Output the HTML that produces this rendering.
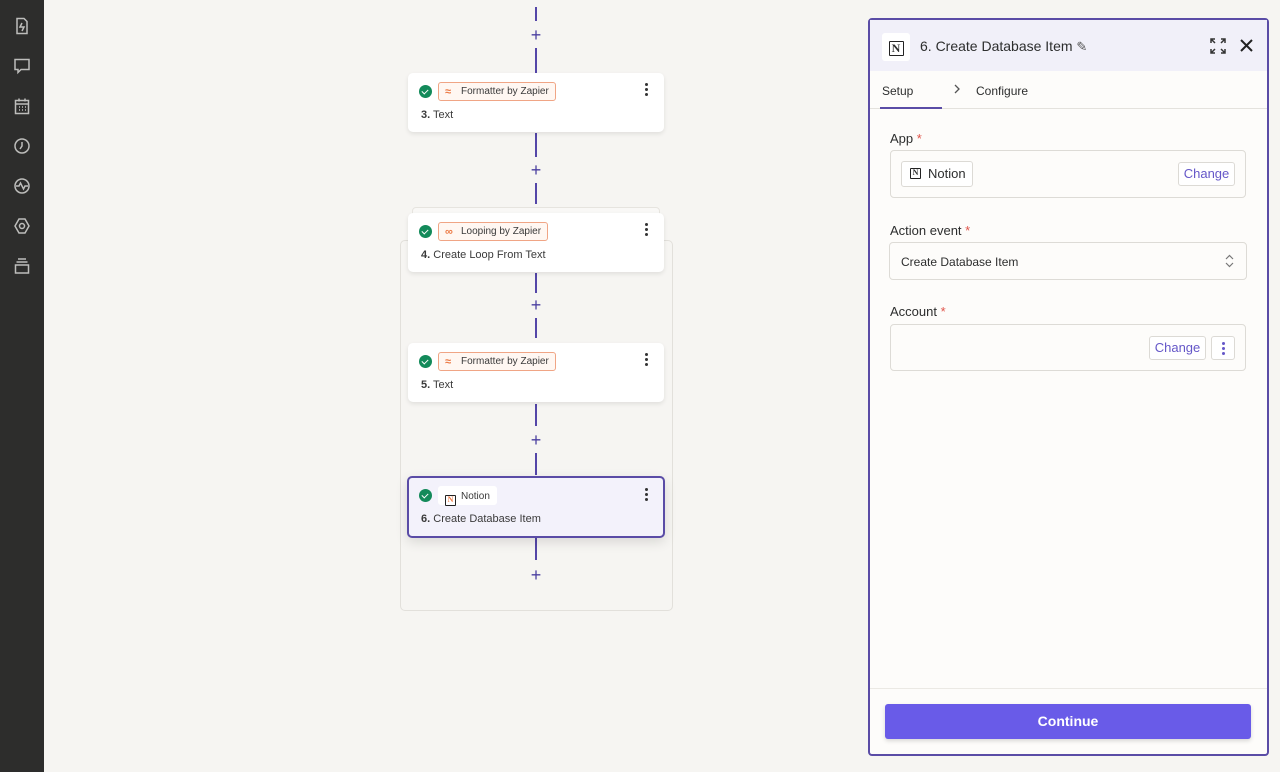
<!DOCTYPE html>
<html><head><meta charset="utf-8"><style>
*{box-sizing:border-box;margin:0;padding:0}
body{width:1280px;height:772px;background:#f6f5f2;font-family:"Liberation Sans",sans-serif;position:relative;overflow:hidden;color:#2d2e2e}
.side{position:absolute;left:0;top:0;width:44px;height:772px;background:#2d2d2c}
.side svg{position:absolute;left:13px;width:18px;height:18px;fill:none;stroke:#bdbdbb;stroke-width:1.5}
.line{position:absolute;left:535px;width:2px;background:#5446a8}
.plus{position:absolute;left:529px;width:14px;height:14px;color:#4b3fa0;font-size:18px;line-height:14px;text-align:center}
.card{position:absolute;left:408px;width:256px;height:59px;background:#fff;border-radius:5px;box-shadow:0 2px 5px rgba(0,0,0,.09)}
.chk{position:absolute;left:11px;top:12px;width:13px;height:13px;border-radius:50%;background:#138a5a}
.chk:after{content:"";position:absolute;left:4px;top:3px;width:3px;height:5px;border:solid #fff;border-width:0 1.5px 1.5px 0;transform:rotate(45deg)}
.tag{position:absolute;left:30px;top:9px;height:19px;border:1px solid #f0a585;background:#fff7f2;border-radius:3px;font-size:10px;line-height:18px;padding:0 6px 0 22px;color:#3a3a3a}
.tag i{position:absolute;left:6px;top:0;color:#ec7a45;font-style:normal;font-size:11px;font-weight:bold}
.dots{position:absolute;right:16px;top:10px;width:3px}
.dots b{display:block;width:3px;height:3px;background:#333;border-radius:50%;margin-bottom:2px}
.title{position:absolute;left:13px;top:36px;font-size:11px;color:#3a3a3a}
.title b{font-weight:bold}
.panel{position:absolute;left:868px;top:18px;width:401px;height:738px;border:2px solid #5a4ca6;border-radius:4px;background:#fdfcfa}
.hdr{height:51px;background:#f1f0f9;position:relative}
.lab{position:absolute;left:20px;font-size:13px;color:#2d2e2e}
.lab span{color:#e0544a}
.box{position:absolute;left:20px;width:356px;border:1px solid #dddbd6;border-radius:4px;background:#fdfcfa}
.btn{position:absolute;border:1px solid #dcdad5;border-radius:3px;font-size:13px;color:#6557c8;background:#fff;text-align:center}
.nl{display:inline-block;width:12px;height:12px;border:1.5px solid #222;font-family:"Liberation Serif",serif;font-size:9px;line-height:9px;text-align:center;font-weight:bold;border-radius:1px}
</style></head><body>
<div class="side">
<svg style="top:17px" viewBox="0 0 18 18"><path d="M4 1.5h7l3 3v12H4z M9 6l-2 4h4l-2 4"/></svg>
<svg style="top:57px" viewBox="0 0 18 18"><path d="M2 2.5h14v10H8l-3 3v-3H2z"/></svg>
<svg style="top:97px" viewBox="0 0 18 18"><path d="M2.5 3.5h13v13h-13z M2.5 7h13 M6 1.5v3 M12 1.5v3 M6 10h1M9 10h1M12 10h1M6 13h1M9 13h1M12 13h1"/></svg>
<svg style="top:137px" viewBox="0 0 18 18"><circle cx="9" cy="9" r="7"/><path d="M9 5v4l-2 3"/></svg>
<svg style="top:177px" viewBox="0 0 18 18"><circle cx="9" cy="9" r="7"/><path d="M3 9h3l1.5-3 3 6 1.5-3h3"/></svg>
<svg style="top:217px" viewBox="0 0 18 18"><path d="M6 2h6l4 7-4 7H6L2 9z"/><circle cx="9" cy="9" r="2.5"/></svg>
<svg style="top:257px" viewBox="0 0 18 18"><path d="M5 2h8 M3.5 5h11 M2.5 8h13v8h-13z"/></svg>
</div>

<div style="position:absolute;left:400px;top:240px;width:273px;height:371px;border:1px solid #e2e0db;border-radius:5px"></div>
<div style="position:absolute;left:412px;top:207px;width:248px;height:10px;border:1px solid #e6e4df;border-radius:4px;background:#f9f8f6"></div>

<div class="line" style="top:7px;height:14px"></div><div class="plus" style="top:28px">+</div><div class="line" style="top:48px;height:25px"></div>
<div class="line" style="top:133px;height:24px"></div><div class="plus" style="top:163px">+</div><div class="line" style="top:183px;height:21px"></div>
<div class="line" style="top:273px;height:20px"></div><div class="plus" style="top:298px">+</div><div class="line" style="top:318px;height:20px"></div>
<div class="line" style="top:404px;height:22px"></div><div class="plus" style="top:433px">+</div><div class="line" style="top:453px;height:22px"></div>
<div class="line" style="top:538px;height:22px"></div><div class="plus" style="top:568px">+</div>

<div class="card" style="top:73px"><div class="chk"></div><div class="tag"><i>≈</i>Formatter by Zapier</div><div class="dots"><b></b><b></b><b></b></div><div class="title"><b>3.</b> Text</div></div>
<div class="card" style="top:213px"><div class="chk"></div><div class="tag"><i>∞</i>Looping by Zapier</div><div class="dots"><b></b><b></b><b></b></div><div class="title"><b>4.</b> Create Loop From Text</div></div>
<div class="card" style="top:343px"><div class="chk"></div><div class="tag"><i>≈</i>Formatter by Zapier</div><div class="dots"><b></b><b></b><b></b></div><div class="title"><b>5.</b> Text</div></div>
<div class="card" style="top:476px;left:407px;width:258px;height:62px;background:#f3f2fb;border:2px solid #5a4ca6;box-shadow:0 4px 12px rgba(0,0,0,.12)"><div class="chk" style="left:10px;top:11px"></div><div class="tag" style="border-color:#fff;background:#fff;left:29px;top:8px;padding-left:22px;line-height:19px"><i style="top:3px"><span class="nl" style="width:11px;height:11px;font-size:8px;line-height:8px">N</span></i>Notion</div><div class="dots" style="top:10px;right:15px"><b></b><b></b><b></b></div><div class="title" style="left:12px;top:35px"><b>6.</b> Create Database Item</div></div>

<div class="panel">
<div class="hdr">
<div style="position:absolute;left:12px;top:13px;width:28px;height:28px;background:#fff;border-radius:3px;text-align:center;padding-top:6px"><span class="nl" style="width:15px;height:15px;font-size:12px;line-height:12px">N</span></div>
<div style="position:absolute;left:50px;top:18px;font-size:14px;color:#2d2e2e">6. Create Database Item <span style="font-size:13px;color:#555">✎</span></div>
<svg style="position:absolute;left:340px;top:18px" width="16" height="16" viewBox="0 0 16 16" fill="none" stroke="#333" stroke-width="1.5"><path d="M1 5V1h4M1 1l4 4M15 5V1h-4M15 1l-4 4M1 11v4h4M1 15l4-4M15 11v4h-4M15 15l-4-4"/></svg>
<svg style="position:absolute;left:370px;top:19px" width="13" height="13" viewBox="0 0 13 13" stroke="#222" stroke-width="2"><path d="M1 1l11 11M12 1L1 12"/></svg>
</div>
<div style="position:relative;height:38px;border-bottom:1px solid #e4e2dd">
<div style="position:absolute;left:12px;top:13px;font-size:12px;color:#2d2e2e">Setup</div>
<div style="position:absolute;left:10px;bottom:-1px;width:62px;height:2px;background:#5a4ca6"></div>
<svg style="position:absolute;left:84px;top:13px" width="7" height="10" viewBox="0 0 7 10" fill="none" stroke="#555" stroke-width="1.3"><path d="M1 1l4 4-4 4"/></svg>
<div style="position:absolute;left:106px;top:13px;font-size:12px;color:#2d2e2e">Configure</div>
</div>
<div class="lab" style="top:111px">App <span>*</span></div>
<div class="box" style="top:130px;height:48px">
<div style="position:absolute;left:10px;top:10px;height:26px;border:1px solid #dcdad5;border-radius:3px;background:#fff;font-size:13px;line-height:24px;padding:0 6px 0 26px"><span class="nl" style="position:absolute;left:8px;top:6px;width:11px;height:11px;font-size:8px;line-height:8px">N</span>Notion</div>
<div class="btn" style="right:10px;top:11px;width:57px;height:24px;line-height:22px">Change</div>
</div>
<div class="lab" style="top:203px">Action event <span>*</span></div>
<div class="box" style="top:222px;height:38px;left:19px;width:358px"><div style="position:absolute;left:11px;top:12px;font-size:12px">Create Database Item</div><svg style="position:absolute;right:12px;top:11px" width="9" height="14" viewBox="0 0 9 14" fill="none" stroke="#777" stroke-width="1.2"><path d="M1 5l3.5-3.5L8 5M1 9l3.5 3.5L8 9"/></svg></div>
<div class="lab" style="top:284px">Account <span>*</span></div>
<div class="box" style="top:304px;height:47px">
<div class="btn" style="right:39px;top:11px;width:57px;height:24px;line-height:22px">Change</div>
<div class="btn" style="right:10px;top:11px;width:24px;height:24px"><div style="position:absolute;left:10px;top:5px;width:3px"><b style="display:block;width:3px;height:3px;background:#6557c8;border-radius:50%;margin-bottom:2px"></b><b style="display:block;width:3px;height:3px;background:#6557c8;border-radius:50%;margin-bottom:2px"></b><b style="display:block;width:3px;height:3px;background:#6557c8;border-radius:50%"></b></div></div>
</div>
<div style="position:absolute;left:0;right:0;top:668px;border-top:1px solid #ebe9e4"></div>
<div style="position:absolute;left:15px;top:684px;width:366px;height:35px;background:#695be8;border-radius:3px;color:#fff;font-weight:bold;font-size:14px;line-height:35px;text-align:center;box-shadow:0 2px 4px rgba(0,0,0,.15)">Continue</div>
</div>
</body></html>
